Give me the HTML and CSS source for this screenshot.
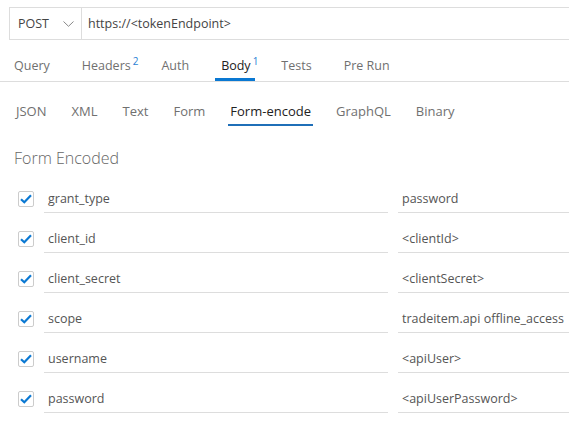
FILE: index.html
```html
<!DOCTYPE html>
<html>
<head>
<meta charset="utf-8">
<link rel="stylesheet" href="styles.css">
</head>
<body>
<div class="urlbar">
  <div class="method">
    <span class="method-name">POST</span>
    <svg class="chev" width="11" height="6" viewBox="0 0 11 6"><path d="M0.5 0.5 L5.5 5.3 L10.5 0.5" fill="none" stroke="#888" stroke-width="1"/></svg>
  </div>
  <div class="url">https://&lt;tokenEndpoint&gt;</div>
</div>

<div class="tabs">
  <span class="tab">Query</span>
  <span class="tab">Headers<sup>2</sup></span>
  <span class="tab">Auth</span>
  <span class="tab active">Body<sup>1</sup></span>
  <span class="tab">Tests</span>
  <span class="tab">Pre Run</span>
</div>

<div class="subtabs">
  <span class="subtab">JSON</span>
  <span class="subtab">XML</span>
  <span class="subtab">Text</span>
  <span class="subtab">Form</span>
  <span class="subtab active">Form-encode</span>
  <span class="subtab">GraphQL</span>
  <span class="subtab">Binary</span>
</div>

<h2 class="heading">Form Encoded</h2>

<div class="rows">
  <div class="row"><span class="cb"><svg width="12" height="10" viewBox="0 0 12 10"><path d="M1 5.2 L4.3 8.3 L11 1.3" fill="none" stroke="#0a78d2" stroke-width="2.2"/></svg></span><div class="key">grant_type</div><div class="val">password</div></div>
  <div class="row"><span class="cb"><svg width="12" height="10" viewBox="0 0 12 10"><path d="M1 5.2 L4.3 8.3 L11 1.3" fill="none" stroke="#0a78d2" stroke-width="2.2"/></svg></span><div class="key">client_id</div><div class="val">&lt;clientId&gt;</div></div>
  <div class="row"><span class="cb"><svg width="12" height="10" viewBox="0 0 12 10"><path d="M1 5.2 L4.3 8.3 L11 1.3" fill="none" stroke="#0a78d2" stroke-width="2.2"/></svg></span><div class="key">client_secret</div><div class="val">&lt;clientSecret&gt;</div></div>
  <div class="row"><span class="cb"><svg width="12" height="10" viewBox="0 0 12 10"><path d="M1 5.2 L4.3 8.3 L11 1.3" fill="none" stroke="#0a78d2" stroke-width="2.2"/></svg></span><div class="key">scope</div><div class="val">tradeitem.api offline_access</div></div>
  <div class="row"><span class="cb"><svg width="12" height="10" viewBox="0 0 12 10"><path d="M1 5.2 L4.3 8.3 L11 1.3" fill="none" stroke="#0a78d2" stroke-width="2.2"/></svg></span><div class="key">username</div><div class="val">&lt;apiUser&gt;</div></div>
  <div class="row"><span class="cb"><svg width="12" height="10" viewBox="0 0 12 10"><path d="M1 5.2 L4.3 8.3 L11 1.3" fill="none" stroke="#0a78d2" stroke-width="2.2"/></svg></span><div class="key">password</div><div class="val">&lt;apiUserPassword&gt;</div></div>
</div>
</body>
</html>
```

FILE: styles.css
```css
html, body {
  margin: 0;
  padding: 0;
  background: #fff;
  overflow: hidden;
}
body {
  font-family: "Open Sans", "Noto Sans", sans-serif;
  font-size: 12.5px;
  color: #555;
  width: 569px;
}
.urlbar {
  display: flex;
  margin: 7px 0 0 9px;
  height: 31px;
  border: 1px solid #ddd;
  border-right: none;
  align-items: stretch;
}
.method {
  width: 72px;
  box-sizing: border-box;
  border-right: 1px solid #ddd;
  display: flex;
  align-items: center;
  padding-left: 8px;
}
.method-name {
  color: #444;
  flex: 1;
}
.chev {
  margin-right: 7px;
}
.url {
  display: flex;
  align-items: center;
  padding-left: 6px;
  color: #444;
}
.tabs {
  display: flex;
  gap: 20px;
  margin-top: 10px;
  padding-left: 8px;
  border-bottom: 1px solid #ddd;
  height: 31px;
}
.tab {
  padding: 0 6px;
  line-height: 31px;
  height: 31px;
  box-sizing: border-box;
  color: #707070;
  position: relative;
}
.tab sup {
  font-size: 10px;
  line-height: 0;
  margin-left: 2px;
  margin-right: -9px;
  color: #2a7fd4;
  vertical-align: 5px;
}
.tab.active {
  color: #222;
  box-shadow: inset 0 -3px 0 #0a78d2;
}
.subtabs {
  display: flex;
  gap: 21px;
  padding-left: 14px;
  margin-top: 14px;
  height: 30px;
  font-size: 13px;
}
.subtab {
  padding: 0 2px;
  line-height: 31px;
  height: 30px;
  box-sizing: border-box;
  color: #707070;
}
.subtab.active {
  color: #222;
  box-shadow: inset 0 -2px 0 #1f6fb8;
}
.heading {
  margin: 21px 0 0 14px;
  font-size: 16px;
  font-weight: 300;
  line-height: 22px;
  color: #666;
}
.rows {
  margin-top: 16px;
}
.row {
  display: flex;
  height: 40px;
  align-items: flex-start;
}
.cb {
  width: 16px;
  height: 16px;
  box-sizing: border-box;
  border: 1px solid #ccc;
  border-radius: 2px;
  margin: 6px 10px 0 18px;
  display: flex;
  align-items: center;
  justify-content: center;
}
.key, .val {
  height: 28px;
  box-sizing: border-box;
  border-bottom: 1px solid #ddd;
  line-height: 27px;
  color: #555;
  padding-left: 4px;
  white-space: nowrap;
  overflow: hidden;
}
.key {
  width: 344px;
}
.val {
  margin-left: 10px;
  flex: 1;
}
```
